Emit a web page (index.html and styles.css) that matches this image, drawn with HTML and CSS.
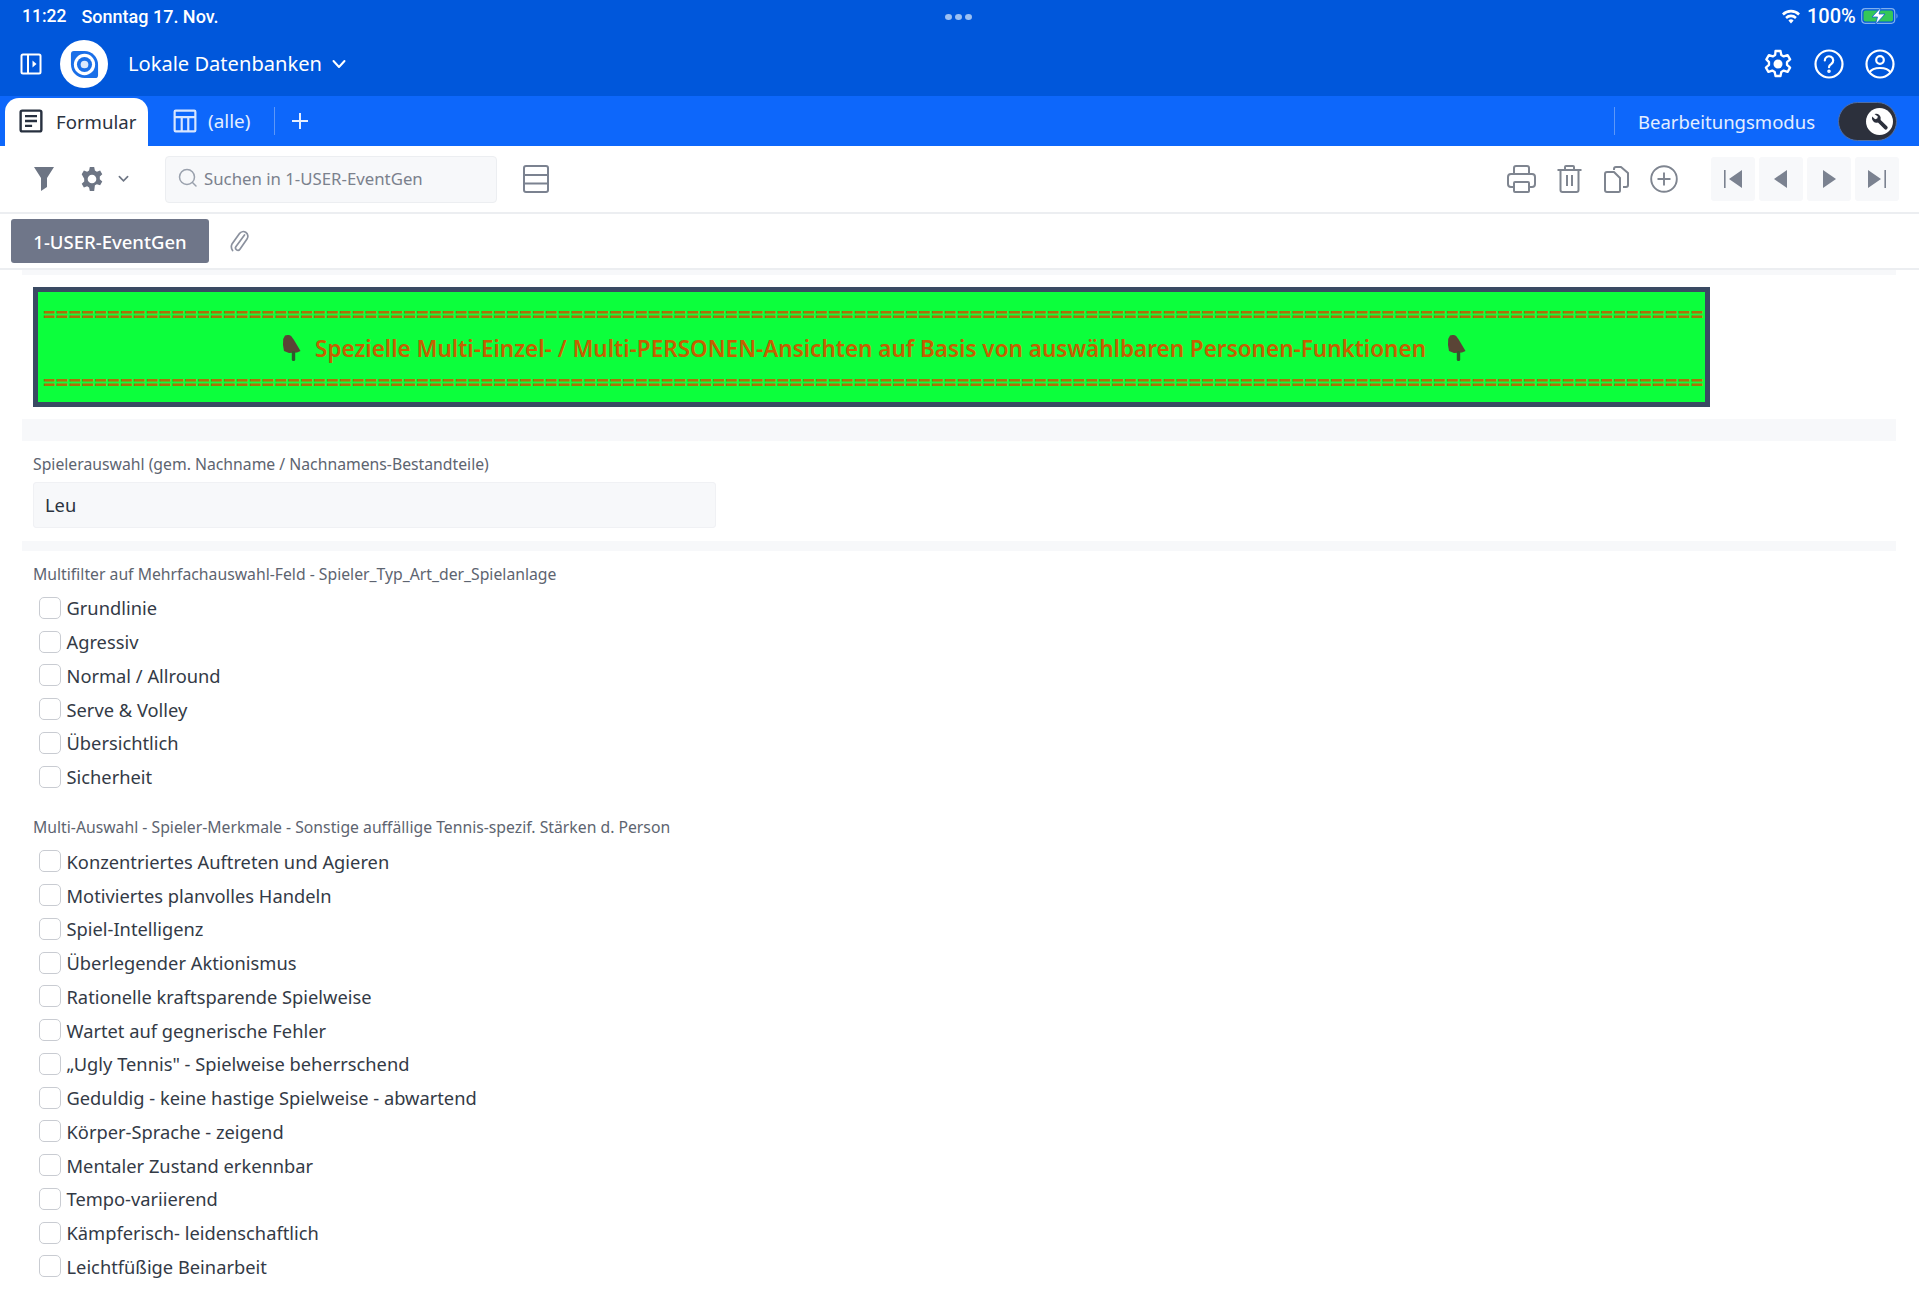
FILE: index.html
```html
<!DOCTYPE html>
<html lang="de">
<head>
<meta charset="utf-8">
<title>Lokale Datenbanken</title>
<link rel="stylesheet" href="styles.css">
</head>
<body>
<div class="page">
  <header class="appbar">
    <div class="status">
      <span class="time">11:22</span><span class="date">Sonntag 17. Nov.</span>
      <span class="dots"><i></i><i></i><i></i></span>
      <svg class="wifi" viewBox="0 0 20 15"><path d="M10 14.500l-2.600-3a3.600 3.600 0 0 1 5.200 0zM5.900 9.900L4.200 8a8.200 8.200 0 0 1 11.600 0l-1.700 1.900a5.800 5.800 0 0 0-8.200 0zM2.800 6.500L1 4.600a12.700 12.700 0 0 1 18 0l-1.800 1.900a10.200 10.200 0 0 0-14.400 0z" fill="#fff"/></svg>
      <span class="pct">100%</span>
      <svg class="battery" viewBox="0 0 37 16"><rect x=".7" y=".7" width="33" height="14.600" rx="3.500" fill="none" stroke="#7fb0ee" stroke-width="1.200"/><rect x="2.500" y="2.500" width="29.500" height="11" rx="2" fill="#34c759"/><path d="M35.500 5.500c1.300.4 1.300 4.600 0 5z" fill="#7fb0ee"/><path d="M20 -.5L11 9h5.500l-2 7.500 9.500-10.500h-6z" fill="#fff" stroke="#0d5fd8" stroke-width=".8"/></svg>
    </div>
    <div class="navrow">
      <svg class="side" viewBox="0 0 22 22" fill="none" stroke="#fff" stroke-width="2"><rect x="1.500" y="1.500" width="19" height="19" rx="1.500"/><path d="M8 1.500v19"/><path d="M12.500 7.500l4 3.500-4 3.500z" fill="#fff" stroke="none"/></svg>
      <span class="logo"><svg viewBox="0 0 30 30"><path d="M4 1H15A14 14 0 0 1 29 15V26a3 3 0 0 1-3 3H15A14 14 0 0 1 1 15V4a3 3 0 0 1 3-3z" fill="#1a6fe8"/><circle cx="15" cy="15" r="11" fill="#fff"/><circle cx="15" cy="15" r="7.800" fill="#1a6fe8"/><circle cx="15" cy="15" r="4" fill="#dbe8fc"/></svg></span>
      <span class="dbname">Lokale Datenbanken</span>
      <svg class="dbchev" viewBox="0 0 14 10" fill="none" stroke="#fff" stroke-width="2" stroke-linecap="round" stroke-linejoin="round"><path d="M1.500 2L7 8l5.500-6"/></svg>
      <span class="grow"></span>
      <svg class="top-ic" viewBox="0 0 30 30" fill="none" stroke="#fff" stroke-width="2.300" stroke-linejoin="round"><path d="M12.500 2h5l.8 4 2.400 1.400 3.900-1.300 2.500 4.300-3.100 2.700v2.800l3.100 2.700-2.500 4.300-3.900-1.300-2.400 1.400-.8 4h-5l-.8-4-2.400-1.400-3.900 1.300-2.500-4.300 3.100-2.700v-2.800L3.400 10.400l2.500-4.300 3.900 1.300 2.400-1.400z"/><circle cx="15" cy="15" r="4.500" fill="#fff" stroke="none"/></svg>
      <svg class="top-ic gap-r" viewBox="0 0 30 30" fill="none" stroke="#fff" stroke-width="2.200" stroke-linecap="round"><circle cx="15" cy="15" r="13.500"/><path d="M10.800 11.500a4.200 4.200 0 1 1 6.500 3.500c-1.500.9-2.300 1.600-2.300 3.200"/><circle cx="15" cy="22.300" r=".7" fill="#fff"/></svg>
      <svg class="top-ic gap-r" viewBox="0 0 30 30" fill="none" stroke="#fff" stroke-width="2.200"><circle cx="15" cy="15" r="13.500"/><circle cx="15" cy="11" r="3.800"/><path d="M4.500 23.500c2-3.500 6-4.500 10.500-4.500s8.500 1 10.500 4.500"/></svg>
    </div>
  </header>

  <nav class="tabbar">
    <div class="tab active">
      <svg class="tab-ic" viewBox="0 0 22 22" fill="none" stroke="#27303f" stroke-width="2.200"><rect x="1.500" y="1.500" width="19" height="19" rx="1.500"/><path d="M5.500 6.500h11M5.500 11h11M5.500 15.500h6.500"/></svg>
      <span>Formular</span>
    </div>
    <div class="tab plain">
      <svg class="tab-ic" viewBox="0 0 22 22" fill="none" stroke="#d8e6ff" stroke-width="2"><rect x="1.500" y="1.500" width="19" height="19" rx="1"/><path d="M1.500 7.500h19M8 7.500v13M14 7.500v13"/></svg>
      <span>(alle)</span>
    </div>
    <span class="vline first"></span>
    <svg class="plus" viewBox="0 0 18 18" fill="none" stroke="#e4eeff" stroke-width="2"><path d="M9 1v16M1 9h16"/></svg>
    <span class="grow"></span>
    <span class="vline"></span>
    <span class="mode">Bearbeitungsmodus</span>
    <span class="toggle"><span class="knob"><svg viewBox="0 0 26 26"><path d="M7 5.500a5.200 5.200 0 0 1 6.700 6.300l7 7a2 2 0 0 1-2.900 2.900l-7-7A5.200 5.200 0 0 1 4.500 8l3.200 3 2.300-.7.700-2.300z" fill="#2c303c"/></svg></span></span>
  </nav>

  <div class="toolbar">
    <svg class="filter" viewBox="0 0 20 26"><path d="M0 1h20L13 12v9l-6 4V12z" fill="#6d7584"/></svg>
    <svg class="gear" viewBox="0 0 24 24"><path fill-rule="evenodd" d="M10 1h4l.7 3.200 1.800 1 3-1 2 3.500-2.300 2.100v2.400l2.300 2.100-2 3.500-3-1-1.800 1L14 23h-4l-.7-3.200-1.800-1-3 1-2-3.500 2.300-2.100V11.800L2.500 7.700l2-3.500 3 1 1.800-1zM12 8a4 4 0 1 0 0 8 4 4 0 0 0 0-8z" fill="#6d7584"/></svg>
    <svg class="mini-chev" viewBox="0 0 12 8" fill="none" stroke="#6d7584" stroke-width="1.800" stroke-linecap="round"><path d="M1.500 1.500L6 6l4.500-4.500"/></svg>
    <div class="search">
      <svg class="lens" viewBox="0 0 20 20" fill="none" stroke="#9aa1ad" stroke-width="1.500" stroke-linecap="round"><circle cx="9" cy="9" r="7.500"/><path d="M14.500 14.500L18 18"/></svg>
      <span>Suchen in 1-USER-EventGen</span>
    </div>
    <svg class="layout" viewBox="0 0 26 28" fill="none" stroke="#7b8290" stroke-width="2"><rect x="1" y="1" width="24" height="26" rx="2"/><path d="M1 10h24M1 18.500h24"/></svg>
    <span class="grow"></span>
    <svg class="print" viewBox="0 0 29 28" fill="none" stroke="#7f8590" stroke-width="2" stroke-linejoin="round"><path d="M7 9V3a2 2 0 0 1 2-2h11a2 2 0 0 1 2 2v6"/><path d="M7 22H4a3 3 0 0 1-3-3v-7a3 3 0 0 1 3-3h21a3 3 0 0 1 3 3v7a3 3 0 0 1-3 3h-3"/><rect x="7" y="17" width="15" height="10" rx="1"/></svg>
    <svg class="trash" viewBox="0 0 25 28" fill="none" stroke="#7f8590" stroke-width="2" stroke-linejoin="round"><path d="M.5 5h24M8 5V2a1 1 0 0 1 1-1h7a1 1 0 0 1 1 1v3M3.500 5v20a2 2 0 0 0 2 2h14a2 2 0 0 0 2-2V5M10 10v11M15 10v11"/></svg>
    <svg class="copy" viewBox="0 0 25 27" fill="none" stroke="#7f8590" stroke-width="2" stroke-linejoin="round"><path d="M3 6h7l6 6v12.500a1.500 1.500 0 0 1-1.500 1.500H3a2 2 0 0 1-2-2V8a2 2 0 0 1 2-2z"/><path d="M10 4V3a2 2 0 0 1 2-2h5l7 6v12a2 2 0 0 1-2 2h-3"/></svg>
    <svg class="addc" viewBox="0 0 28 28" fill="none" stroke="#7f8590" stroke-width="1.900"><circle cx="14" cy="14" r="12.800"/><path d="M14 7.500v13M7.500 14h13"/></svg>
    <div class="pager">
      <span class="pg"><svg viewBox="0 0 20 18"><path d="M1 0h1.600v18H1zM19 0v18L6 9z" fill="#7b8290"/></svg></span>
      <span class="pg"><svg viewBox="0 0 20 18"><path d="M16 0v18L3 9z" fill="#7b8290"/></svg></span>
      <span class="pg"><svg viewBox="0 0 20 18"><path d="M4 0v18l13-9z" fill="#7b8290"/></svg></span>
      <span class="pg"><svg viewBox="0 0 20 18"><path d="M1 0v18l13-9zM17.400 0H19v18h-1.600z" fill="#7b8290"/></svg></span>
    </div>
  </div>

  <div class="tabrow">
    <span class="formtab">1-USER-EventGen</span>
    <svg class="clip" viewBox="0 0 20 24" fill="none" stroke="#8b919e" stroke-width="1.700" stroke-linecap="round"><path d="M15.500 6L7 17.500a2.400 2.400 0 0 0 3.900 2.800L18 10a4.600 4.600 0 0 0-7.500-5.400L3 15a6.500 6.500 0 0 0 .6 6.500"/></svg>
  </div>

  <main class="form">
    <div class="band b1"></div>
    <div class="banner">
      <div class="eq">=================================================================================================================================</div>
      <div class="headline">
        <svg class="hand" viewBox="0 0 18 26"><path d="M2 .5C4 -.3 7 -.2 8.500 1.500L11 5l6.500 11-3.500 1.500-8 .5-5-2L0 10 .2 4z" fill="#5a4436"/><rect x="8.800" y="16" width="3.400" height="10" rx="1.500" fill="#2f5a2d"/></svg>
        <span>Spezielle Multi-Einzel- / Multi-PERSONEN-Ansichten auf Basis von auswählbaren Personen-Funktionen</span>
        <svg class="hand after" viewBox="0 0 18 26"><path d="M2 .5C4 -.3 7 -.2 8.500 1.500L11 5l6.500 11-3.500 1.500-8 .5-5-2L0 10 .2 4z" fill="#5a4436"/><rect x="8.800" y="16" width="3.400" height="10" rx="1.500" fill="#2f5a2d"/></svg>
      </div>
      <div class="eq">=================================================================================================================================</div>
    </div>
    <div class="band b2"></div>
    <label class="fieldlabel first-label">Spielerauswahl (gem. Nachname / Nachnamens-Bestandteile)</label>
    <div class="input">Leu</div>
    <div class="band b3"></div>

    <div class="fieldlabel group-label">Multifilter auf Mehrfachauswahl-Feld - Spieler_Typ_Art_der_Spielanlage</div>
    <ul class="checks">
      <li><span class="box"></span>Grundlinie</li>
      <li><span class="box"></span>Agressiv</li>
      <li><span class="box"></span>Normal / Allround</li>
      <li><span class="box"></span>Serve &amp; Volley</li>
      <li><span class="box"></span>Übersichtlich</li>
      <li><span class="box"></span>Sicherheit</li>
    </ul>

    <div class="fieldlabel group-label second">Multi-Auswahl - Spieler-Merkmale - Sonstige auffällige Tennis-spezif. Stärken d. Person</div>
    <ul class="checks wide-gap">
      <li><span class="box"></span>Konzentriertes Auftreten und Agieren</li>
      <li><span class="box"></span>Motiviertes planvolles Handeln</li>
      <li><span class="box"></span>Spiel-Intelligenz</li>
      <li><span class="box"></span>Überlegender Aktionismus</li>
      <li><span class="box"></span>Rationelle kraftsparende Spielweise</li>
      <li><span class="box"></span>Wartet auf gegnerische Fehler</li>
      <li><span class="box"></span>„Ugly Tennis" - Spielweise beherrschend</li>
      <li><span class="box"></span>Geduldig - keine hastige Spielweise - abwartend</li>
      <li><span class="box"></span>Körper-Sprache - zeigend</li>
      <li><span class="box"></span>Mentaler Zustand erkennbar</li>
      <li><span class="box"></span>Tempo-variierend</li>
      <li><span class="box"></span>Kämpferisch- leidenschaftlich</li>
      <li><span class="box"></span>Leichtfüßige Beinarbeit</li>
    </ul>
  </main>
</div>
</body>
</html>
```

FILE: styles.css
```css
* { box-sizing: border-box; }
html, body { margin: 0; padding: 0; background: #fff; }
body { font-family: "Noto Sans", "Open Sans", sans-serif; color: #333a46; }
.page { width: 1919px; height: 1291px; overflow: hidden; display: flex; flex-direction: column; }
.grow { flex: 1; }
svg { display: block; flex: none; }

/* blue header */
.appbar { height: 96px; background: #0057db; color: #fff; flex: none; }
.status { height: 32px; display: flex; align-items: center; padding: 0 21px 0 22px; font-family: Roboto, sans-serif; font-weight: 500; font-size: 17px; position: relative; }
.time { font-size: 17.500px; }
.date { margin-left: 15px; font-size: 18px; }
.dots { position: absolute; left: 945px; top: 14px; display: flex; gap: 3px; }
.dots i { width: 7px; height: 6px; border-radius: 50%; background: #9cc0f2; }
.wifi { width: 20px; height: 15px; margin-left: auto; }
.pct { margin-left: 6px; width: 48px; font-size: 20px; font-weight: 500; white-space: nowrap; }
.battery { width: 37px; height: 16px; margin-left: 6px; }
.navrow { height: 64px; display: flex; align-items: center; padding: 0 24px 0 20px; }
.side { width: 22px; height: 22px; }
.logo { width: 48px; height: 48px; margin-left: 18px; border-radius: 50%; background: #fff; display: flex; align-items: center; justify-content: center; }
.logo svg { width: 29px; height: 29px; }
.dbname { margin-left: 20px; font-size: 20.100px; line-height: 28px; }
.dbchev { width: 14px; height: 10px; margin-left: 10px; }
.top-ic { width: 30px; height: 30px; }
.gap-r { margin-left: 21px; }

/* tabs */
.tabbar { height: 50px; flex: none; background: #0d67fb; display: flex; align-items: center; padding: 0 22px 0 5px; color: #e4eeff; }
.tab { display: flex; align-items: center; font-size: 18.600px; }
.tab.active { width: 143px; height: 48px; align-self: flex-end; padding: 0 0 2px 14px; background: #fff; color: #2b3340; border-radius: 14px 14px 0 0; gap: 13px; }
.tab.plain { margin-left: 25px; gap: 11px; font-size: 18.900px; }
.tab-ic { width: 24px; height: 24px; }
.vline { width: 1px; height: 28px; background: #5c97f8; }
.vline.first { margin-left: 24px; }
.plus { width: 18px; height: 18px; margin-left: 16px; }
.mode { margin-left: 23px; font-size: 18.500px; }
.toggle { width: 59px; height: 39px; margin-left: 23px; border-radius: 20px; background: #2c303c; border: 1px solid #4f6ea6; display: flex; align-items: center; justify-content: flex-end; padding-right: 3px; }
.knob { width: 27px; height: 27px; border-radius: 50%; background: #fff; display: flex; align-items: center; justify-content: center; }
.knob svg { width: 24px; height: 24px; }

/* toolbar */
.toolbar { height: 68px; flex: none; display: flex; align-items: center; padding: 0 20px 0 34px; border-bottom: 2px solid #eceef1; }
.filter { width: 20px; height: 26px; }
.gear { width: 26px; height: 26px; margin-left: 25px; }
.mini-chev { width: 11px; height: 8px; margin-left: 13px; }
.search { width: 332px; height: 47px; margin-left: 36px; padding-bottom: 2px; background: #f7f8fa; border: 1px solid #eceef1; border-radius: 4px; display: flex; align-items: center; padding-left: 12px; gap: 6px; font-size: 16.800px; color: #7b818d; }
.lens { width: 20px; height: 20px; }
.layout { width: 26px; height: 28px; margin-left: 26px; }
.print { width: 29px; height: 28px; }
.trash { width: 25px; height: 28px; margin-left: 21px; }
.copy { width: 25px; height: 27px; margin-left: 22px; }
.addc { width: 28px; height: 28px; margin-left: 21px; }
.pager { display: flex; gap: 4px; margin-left: 33px; }
.pg { width: 44px; height: 44px; background: #f7f8fa; border-radius: 3px; display: flex; align-items: center; justify-content: center; }
.pg svg { width: 20px; height: 18px; }

/* form tabs */
.tabrow { height: 56px; flex: none; display: flex; align-items: center; padding: 0 0 0 11px; border-bottom: 2px solid #eceef1; }
.formtab { width: 198px; height: 44px; border-radius: 3px; background: #6f7689; color: #fff; font-size: 18.500px; font-weight: 500; display: flex; align-items: center; justify-content: center; }
.clip { width: 20px; height: 24px; margin-left: 20px; }

/* form */
.form { padding: 0 23px 0 33px; flex: 1; }
.band { background: #f7f8fa; margin-left: -11px; }
.b1 { height: 5px; }
.b2 { height: 22px; margin-top: 12px; }
.b3 { height: 10px; margin-top: 13px; }
.banner { width: 1677px; height: 120px; margin-top: 12px; border: 5px solid #3a4a63; background: #0cff3c; overflow: hidden; display: flex; flex-direction: column; align-items: stretch; padding-top: 11px; }
.eq { font-size: 21.900px; letter-spacing: .22px; line-height: 22px; height: 22px; font-weight: 800; color: #ad7008; white-space: nowrap; padding-left: 5px; }
.headline { height: 46px; display: flex; align-items: center; justify-content: center; gap: 14px; font-size: 22.500px; font-weight: 600; color: #c46000; margin-left: 6px; }
.hand { width: 18px; height: 26px; }
.hand.after { margin-left: 8px; }
.fieldlabel { display: block; font-size: 15.750px; line-height: 20px; color: #5d6470; }
.first-label { margin-top: 13px; }
.input { width: 683px; height: 46px; margin-top: 8px; background: #f7f8fa; border: 1px solid #f0f1f4; border-radius: 3px; padding: 0 0 2px 11px; display: flex; align-items: center; font-size: 18.300px; color: #2b3340; }
.group-label { margin-top: 13px; }
.group-label.second { margin-top: 23px; }
.checks { list-style: none; margin: 7px 0 0; padding: 0; }
.checks.wide-gap { margin-top: 8px; }
.checks li { height: 33.750px; display: flex; align-items: center; padding-left: 6px; font-size: 18.300px; color: #333a46; white-space: nowrap; }
.box { width: 22px; height: 22px; margin-right: 5.500px; border: 1.500px solid #c9ccd2; border-radius: 5px; background: #fff; flex: none; }
```
